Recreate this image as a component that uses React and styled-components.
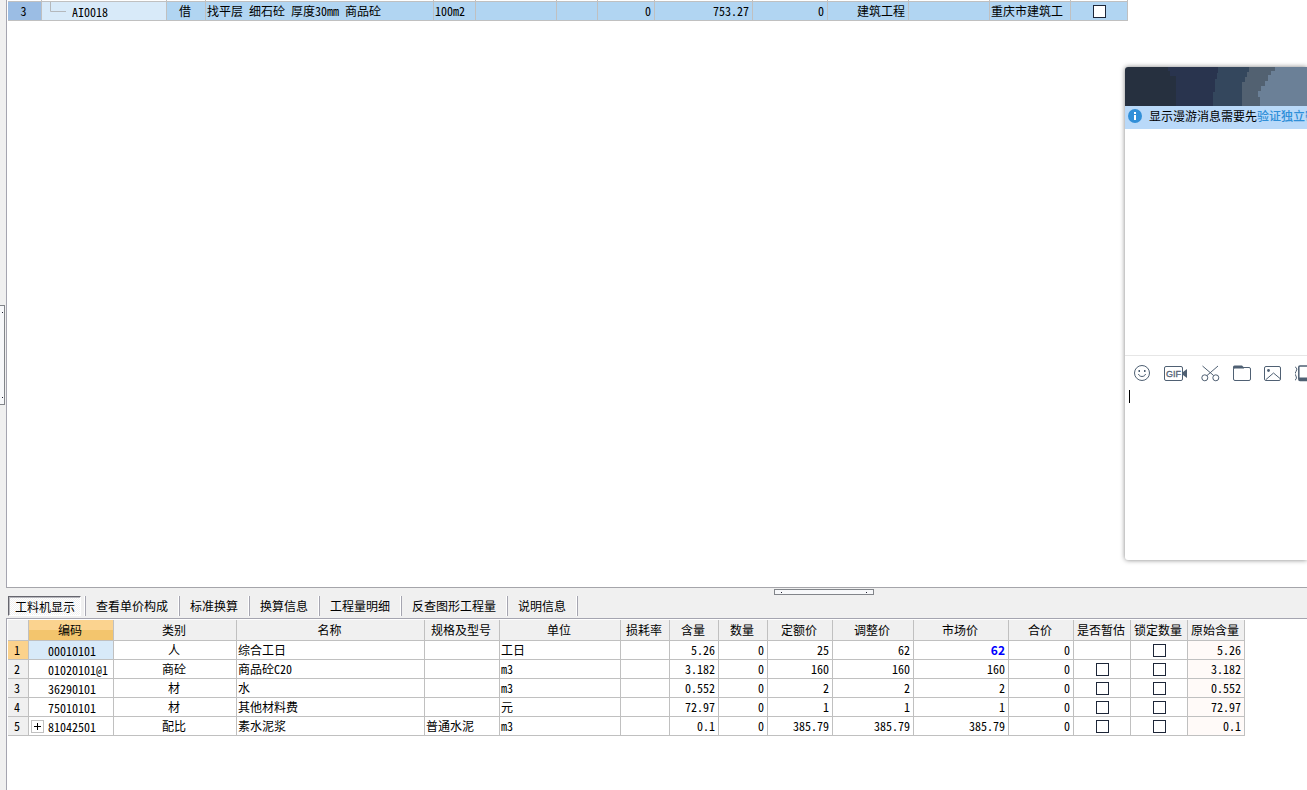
import styled, { createGlobalStyle, css } from "styled-components";

const GlobalStyle = createGlobalStyle`
    * {
        box-sizing: border-box;
    }

    body {
        margin: 0;
        background-color: #fff;
    }

    body, button, input, textarea {
        color: #000;
        font-family: "Noto Sans CJK SC", sans-serif;
        font-size: 12px;
        font-feature-settings: "hwid" 1;
    }
`;

const PageStyled = styled.div`
    background-color: #f0f0f0;
    display: flex;
    flex-direction: column;
    min-height: 100vh;
    overflow: hidden;
    position: relative;
`;

const UpperPaneStyled = styled.div`
    display: flex;
    flex-grow: 1;
`;

const GutterStyled = styled.div`
    align-items: flex-start;
    display: flex;
    flex-shrink: 0;
    padding-top: 305px;
    width: 6px;
`;

const SheetStyled = styled.div`
    background-color: #fff;
    border-bottom: 1px solid #a5a5aa;
    border-left: 1px solid #a5a5b0;
    flex-grow: 1;
    min-width: 0;
    overflow: hidden;
    padding-left: 1px;
`;

const LowerPaneStyled = styled.div`
    display: flex;
    flex-direction: column;
    min-height: 202px;

    ${SheetStyled} {
        border-bottom: none;
        border-top: 1px solid #a5a5b0;
        margin-left: 6px;
        padding-top: 1px;
    }
`;

const HandleStyled = styled.button`
    align-items: center;
    background-color: #f7f8fa;
    border: 1px solid #82858a;
    display: flex;
    justify-content: space-between;
    padding: 0;

    &::before, &::after {
        background-color: #223;
        content: "";
        height: 1px;
        width: 1px;
    }

    ${({ $vertical }) => $vertical ? css`
        border-left: none;
        flex-direction: column;
        height: 100px;
        padding: 6px 0px 6px 1px;
        width: 5px;
    ` : css`
        height: 6px;
        margin-left: 59%;
        padding: 0px 6px;
        width: 100px;
    `}
`;

const SplitterStyled = styled.div`
    height: 8px;
    padding: 1px 0px 0px 6px;
`;

const TabsStyled = styled.div`
    align-items: flex-start;
    display: flex;
    height: 22px;
    padding-left: 8px;
`;

const TabStyled = styled.button`
    background-color: transparent;
    border: none;
    border-right: 1px solid #a5a5b0;
    box-shadow: inset -1px 0px #fff;
    height: 20px;
    line-height: 20px;
    padding: 0px 11px 0px 10px;
    white-space: nowrap;

    ${({ $active }) => $active && css`
        background: repeating-conic-gradient(#fff 0% 25%, #f0f0f0 0% 50%) 0px 0px / 2px 2px;
        border: 1px solid #fff;
        border-left-color: #66666e;
        border-top-color: #66666e;
        box-shadow: inset 1px 1px #b8b8be;
        padding: 0px 5px 0px 6px;
    `}
`;

const TabDividerStyled = styled.span`
    border-left: 1px solid #fff;
    border-right: 1px solid #a5a5b0;
    height: 20px;
    margin-left: 3px;
`;

const TableStyled = styled.table`
    border-collapse: separate;
    border-spacing: 0;
    table-layout: fixed;
    width: ${({ $width }) => $width}px;

    th, td {
        border-bottom: 1px solid #c0c0c0;
        border-right: 1px solid #c0c0c0;
        font-weight: normal;
        height: 19px;
        line-height: 18px;
        overflow: hidden;
        padding: 0px 3px 0px 1px;
        text-align: left;
        white-space: nowrap;
    }

    th {
        background-color: #f0f0f0;
        text-align: center;
    }

    thead th {
        height: 21px;
        line-height: 20px;
        padding: 0px 2px 0px 0px;
    }
`;

const HeadCellStyled = styled.th`
    ${({ $selected }) => $selected && css`
        && {
            background: linear-gradient(#fbd38f 50%, #f3c56d 50%);
        }
    `}
`;

const RowHeadStyled = styled.th`
    && {
        background-color: ${({ $color }) => $color || "#f0f0f0"};
        padding: 0px 3px 0px 1px;
        text-align: center;
    }
`;

const CellStyled = styled.td`
    background-color: ${({ $color }) => $color || "#fff"};

    && {
        text-align: ${({ $align }) => $align || "left"};
    }
`;

const CheckCellStyled = styled(CellStyled)`
    && {
        padding: 0px;
    }
`;

const StrongStyled = styled.strong`
    color: #00f;
    font-feature-settings: normal;
    font-weight: bold;
`;

const PreviousRowStyled = styled.tr`
    && td {
        height: 2px;
        line-height: 1px;
        padding: 0px;
    }
`;

const CodeStyled = styled.div`
    align-items: center;
    display: flex;
    height: 18px;
    line-height: 18px;
    padding: 1px 0px 0px 1px;
`;

const ExpandSlotStyled = styled.span`
    display: flex;
    flex-shrink: 0;
    width: 17px;
`;

const ExpandStyled = styled.button`
    align-items: center;
    background-color: #fff;
    border: 1px solid #c0c0c0;
    display: flex;
    height: 13px;
    justify-content: center;
    padding: 0;
    width: 13px;
`;

const BranchStyled = styled.svg`
    align-self: flex-start;
    flex-shrink: 0;
    height: 18px;
    margin-top: -1px;
    width: 28px;
`;

const CheckboxStyled = styled.input`
    appearance: none;
    background-color: #fff;
    border: 1px solid #1d2638;
    display: block;
    height: 13px;
    margin: 0 auto;
    width: 13px;
`;

const ChatStyled = styled.section`
    background-color: #fff;
    border-radius: 3px 0px 0px 3px;
    box-shadow: 0px 0px 5px rgba(0, 0, 0, 0.5);
    display: flex;
    flex-direction: column;
    height: 493px;
    position: absolute;
    right: 0;
    top: 67px;
    width: 182px;
`;

const BannerStyled = styled.svg`
    border-top-left-radius: 3px;
    display: block;
    flex-shrink: 0;
    height: 39px;
    width: 100%;
`;

const NoticeStyled = styled.div`
    align-items: center;
    background-color: #b9d9f9;
    display: flex;
    flex-shrink: 0;
    height: 23px;
    line-height: 20px;
    overflow: hidden;
    padding: 0px 0px 3px 3px;
    white-space: nowrap;

    svg {
        flex-shrink: 0;
        margin-right: 7px;
    }

    a {
        color: #2f8fd8;
        font-weight: 500;
        text-decoration: none;
    }
`;

const MessagesStyled = styled.div`
    border-bottom: 1px solid #e6e6e6;
    flex-grow: 1;
`;

const ToolbarStyled = styled.div`
    display: flex;
    flex-shrink: 0;
    gap: 13px;
    height: 33px;
    overflow: hidden;
    padding: 8px 0px 0px 8px;

    button {
        background-color: transparent;
        border: none;
        flex-shrink: 0;
        height: 18px;
        padding: 0;
    }

    svg {
        display: block;
        fill: none;
        stroke: #4f6073;
    }
`;

const ComposerStyled = styled.div`
    display: flex;
    flex-shrink: 0;
    height: 171px;
    padding: 1px 0px 0px 4px;

    textarea {
        background-color: transparent;
        border: none;
        flex-grow: 1;
        min-width: 0;
        outline: none;
        padding: 0;
        resize: none;
    }
`;

const CaretStyled = styled.span`
    background-color: #000;
    height: 13px;
    width: 1px;
`;

const quotaWidths = [34, 125, 39, 228, 42, 81, 41, 57, 98, 75, 81, 81, 81, 57];

const tabs = ["查看单价构成", "标准换算", "换算信息", "工程量明细", "反查图形工程量", "说明信息"];

const columns = [
    { name: "编码", width: 85, selected: true },
    { name: "类别", width: 123 },
    { name: "名称", width: 188 },
    { name: "规格及型号", width: 75 },
    { name: "单位", width: 121 },
    { name: "损耗率", width: 49 },
    { name: "含量", width: 49 },
    { name: "数量", width: 49 },
    { name: "定额价", width: 65 },
    { name: "调整价", width: 81 },
    { name: "市场价", width: 95 },
    { name: "合价", width: 65 },
    { name: "是否暂估", width: 57 },
    { name: "锁定数量", width: 57 },
    { name: "原始含量", width: 57 }
];

const resources = [
    { codigo: "00010101", tipo: "人", nome: "综合工日", unidade: "工日", teor: "5.26", base: "25", ajuste: "62", mercado: "62", destaque: true },
    { codigo: "01020101@1", tipo: "商砼", nome: "商品砼C20", unidade: "m3", teor: "3.182", base: "160", ajuste: "160", mercado: "160", estimavel: true },
    { codigo: "36290101", tipo: "材", nome: "水", unidade: "m3", teor: "0.552", base: "2", ajuste: "2", mercado: "2", estimavel: true },
    { codigo: "75010101", tipo: "材", nome: "其他材料费", unidade: "元", teor: "72.97", base: "1", ajuste: "1", mercado: "1", estimavel: true },
    { codigo: "81042501", tipo: "配比", nome: "素水泥浆", modelo: "普通水泥", unidade: "m3", teor: "0.1", base: "385.79", ajuste: "385.79", mercado: "385.79", estimavel: true, grupo: true }
];

function QuotaTable() {
    const blue = "#b1d5f2";

    return (
        <TableStyled $width={1120}>
            <colgroup>
                {quotaWidths.map((width, index) => <col key={index} width={width} />)}
            </colgroup>
            <tbody>
                <PreviousRowStyled aria-hidden="true">
                    {quotaWidths.map((width, index) => <td key={index}></td>)}
                </PreviousRowStyled>
                <tr>
                    <RowHeadStyled scope="row" $color="#9bbde4">3</RowHeadStyled>
                    <CellStyled $color="#d8eaf9">
                        <CodeStyled>
                            <BranchStyled viewBox="0 0 28 18" fill="none" stroke="#b4b8bc">
                                <path d="M6.5 0V9.5H22" />
                            </BranchStyled>
                            AI0018
                        </CodeStyled>
                    </CellStyled>
                    <CellStyled $color={blue} $align="center">借</CellStyled>
                    <CellStyled $color={blue}>找平层 细石砼 厚度30mm 商品砼</CellStyled>
                    <CellStyled $color={blue}>100m2</CellStyled>
                    <CellStyled $color={blue}></CellStyled>
                    <CellStyled $color={blue}></CellStyled>
                    <CellStyled $color={blue} $align="right">0</CellStyled>
                    <CellStyled $color={blue} $align="right">753.27</CellStyled>
                    <CellStyled $color={blue} $align="right">0</CellStyled>
                    <CellStyled $color={blue} $align="right">建筑工程</CellStyled>
                    <CellStyled $color={blue}></CellStyled>
                    <CellStyled $color={blue}>重庆市建筑工</CellStyled>
                    <CheckCellStyled $color={blue}><CheckboxStyled type="checkbox" aria-label="3" /></CheckCellStyled>
                </tr>
            </tbody>
        </TableStyled>
    );
}

function ResourceTable() {
    return (
        <TableStyled $width={1237}>
            <colgroup>
                <col width={21} />
                {columns.map((column) => <col key={column.name} width={column.width} />)}
            </colgroup>
            <thead>
                <tr>
                    <th></th>
                    {columns.map((column) => (
                        <HeadCellStyled key={column.name} scope="col" $selected={column.selected}>{column.name}</HeadCellStyled>
                    ))}
                </tr>
            </thead>
            <tbody>
                {resources.map((item, index) => {
                    return (
                        <tr key={item.codigo}>
                            <RowHeadStyled scope="row" $color={index === 0 ? "#fbd28c" : null}>{index + 1}</RowHeadStyled>
                            <CellStyled $color={index === 0 ? "#d8eaf9" : null}>
                                <CodeStyled>
                                    <ExpandSlotStyled>
                                        {item.grupo ? <ExpandStyled aria-label={item.nome}>
                                            <svg width="7" height="7" viewBox="0 0 7 7" stroke="#000"><path d="M0 3.5H7M3.5 0V7" /></svg>
                                        </ExpandStyled> : <></>}
                                    </ExpandSlotStyled>
                                    {item.codigo}
                                </CodeStyled>
                            </CellStyled>
                            <CellStyled $align="center">{item.tipo}</CellStyled>
                            <CellStyled>{item.nome}</CellStyled>
                            <CellStyled>{item.modelo}</CellStyled>
                            <CellStyled>{item.unidade}</CellStyled>
                            <CellStyled></CellStyled>
                            <CellStyled $align="right">{item.teor}</CellStyled>
                            <CellStyled $align="right">0</CellStyled>
                            <CellStyled $align="right">{item.base}</CellStyled>
                            <CellStyled $align="right">{item.ajuste}</CellStyled>
                            <CellStyled $align="right">{item.destaque ? <StrongStyled>{item.mercado}</StrongStyled> : item.mercado}</CellStyled>
                            <CellStyled $align="right">0</CellStyled>
                            <CheckCellStyled>{item.estimavel ? <CheckboxStyled type="checkbox" aria-label="是否暂估" /> : <></>}</CheckCellStyled>
                            <CheckCellStyled><CheckboxStyled type="checkbox" aria-label="锁定数量" /></CheckCellStyled>
                            <CellStyled $align="right" $color="#fffaf8">{item.teor}</CellStyled>
                        </tr>
                    );
                })}
            </tbody>
        </TableStyled>
    );
}

function ChatWindow() {
    return (
        <ChatStyled>
            <BannerStyled viewBox="0 0 182 39" preserveAspectRatio="xMinYMin slice">
                <path fill="#26303f" d="M0 0H60V39H0z" />
                <path fill="#29344e" d="M43 0H100V39H51V9H45V4H43z" />
                <path fill="#34475d" d="M93 0H130V39H88V25H90V12H92V6H93z" />
                <path fill="#526171" d="M124 0H160V39H117V15H120V10H122V5H124z" />
                <path fill="#6b8097" d="M150 0H182V39H135V30H133V24H136V19H140V14H143V8H146V4H150z" />
            </BannerStyled>
            <NoticeStyled>
                <svg width="14" height="14" viewBox="0 0 14 14">
                    <circle cx="7" cy="7" r="7" fill="#318fd8" />
                    <path fill="#fff" d="M6 3H8V5H6zM6 6H8V11H6z" />
                </svg>
                显示漫游消息需要先<a href="#">验证独立密码</a>
            </NoticeStyled>
            <MessagesStyled />
            <ToolbarStyled>
                <button aria-label="表情">
                    <svg width="18" height="18" viewBox="0 0 18 18">
                        <circle cx="9" cy="9" r="7.5" />
                        <path d="M5.5 10C6 13.3 12 13.3 12.5 10" />
                        <path strokeWidth="2" d="M5.5 7H7M11 7H12.5" />
                    </svg>
                </button>
                <button aria-label="GIF">
                    <svg width="24" height="18" viewBox="0 0 24 18">
                        <rect x="0.5" y="2.5" width="18" height="14" rx="1.5" />
                        <path fill="#4f6073" stroke="none" d="M19 8L21 6.5L23 5V14L21 12.5L19 11z" />
                        <text x="2" y="13" fill="#4f6073" stroke="#4f6073" strokeWidth="0.3" fontFamily="Liberation Sans, sans-serif" fontSize="9">GIF</text>
                    </svg>
                </button>
                <button aria-label="截图">
                    <svg width="19" height="18" viewBox="0 0 19 18">
                        <circle cx="3.8" cy="13.8" r="3" />
                        <circle cx="14.8" cy="13.8" r="3" />
                        <path d="M1.5 2L12.6 11.5M17 2L6 11.5" />
                    </svg>
                </button>
                <button aria-label="文件">
                    <svg width="18" height="18" viewBox="0 0 18 18">
                        <rect x="0.5" y="3.5" width="17" height="13" rx="1.5" />
                        <path fill="#4f6073" stroke="none" d="M0 5V3Q0 1.5 1.5 1.5H9L11 3.5V4.5H0z" />
                    </svg>
                </button>
                <button aria-label="图片">
                    <svg width="18" height="18" viewBox="0 0 18 18">
                        <rect x="0.5" y="2.5" width="16" height="14" rx="1.5" />
                        <circle cx="4.5" cy="6.5" r="1.4" fill="#4f6073" stroke="none" />
                        <path d="M2 15.5L9.5 9L16 14.5" />
                    </svg>
                </button>
                <button aria-label="窗口抖动">
                    <svg width="18" height="18" viewBox="0 0 18 18">
                        <path d="M0 2.5Q3.5 5 1 7.5T1 12Q2.5 14 0 16.5" />
                        <path strokeWidth="1.5" d="M18 2H5Q3.8 2 3.8 3V15Q3.8 16.5 5 16.5H18" />
                        <path strokeWidth="3" d="M4 15H18" />
                    </svg>
                </button>
            </ToolbarStyled>
            <ComposerStyled>
                <CaretStyled />
                <textarea aria-label="消息"></textarea>
            </ComposerStyled>
        </ChatStyled>
    );
}

function App() {
    return (
        <PageStyled>
            <GlobalStyle />
            <UpperPaneStyled>
                <GutterStyled>
                    <HandleStyled $vertical aria-label="左侧面板" />
                </GutterStyled>
                <SheetStyled>
                    <QuotaTable />
                </SheetStyled>
            </UpperPaneStyled>

            <LowerPaneStyled>
                <SplitterStyled>
                    <HandleStyled aria-label="下方面板" />
                </SplitterStyled>
                <TabsStyled>
                    <TabStyled $active>工料机显示</TabStyled>
                    <TabDividerStyled />
                    {tabs.map((tab) => <TabStyled key={tab}>{tab}</TabStyled>)}
                </TabsStyled>
                <SheetStyled>
                    <ResourceTable />
                </SheetStyled>
            </LowerPaneStyled>

            <ChatWindow />
        </PageStyled>
    );
}

export default App;
